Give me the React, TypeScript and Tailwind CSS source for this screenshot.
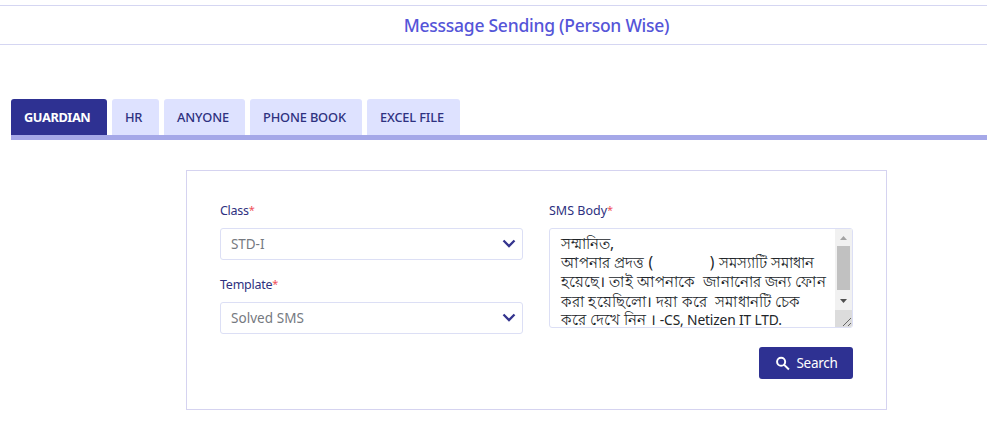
const tabs = [
  { label: "GUARDIAN", box: "w-24 bg-[#2e3192] text-white font-bold", text: "tracking-[-0.42px]" },
  { label: "HR", box: "w-[47px] bg-[#dee2ff] text-[#2e3180] font-medium", text: "tracking-[-0.2px]" },
  { label: "ANYONE", box: "w-[81px] bg-[#dee2ff] text-[#2e3180] font-medium", text: "tracking-[-0.1px]" },
  { label: "PHONE BOOK", box: "w-28 bg-[#dee2ff] text-[#2e3180] font-medium", text: "tracking-[-0.15px]" },
  { label: "EXCEL FILE", box: "w-[93px] bg-[#dee2ff] text-[#2e3180] font-medium", text: "tracking-[-0.15px]" },
];

const messageLines = [
  { text: "সম্মানিত,", style: "" },
  { text: "আপনার প্রদত্ত (              ) সমস্যাটি সমাধান", style: "tracking-[0.06px]" },
  { text: "হয়েছে। তাই আপনাকে  জানানোর জন্য ফোন", style: "tracking-[0.12px]" },
  { text: "করা হয়েছিলো। দয়া করে  সমাধানটি চেক", style: "tracking-[0.16px]" },
];

function Label({ children, text }: { children: string; text: string }) {
  return (
    <div className="h-[18px] whitespace-nowrap text-[12.5px] leading-[18px] text-[#2e3180]">
      <span className={text}>{children}</span>
      <span className="align-[1px] text-[11px] leading-none text-[#f0505a]">*</span>
    </div>
  );
}

function Select({ value, text }: { value: string; text: string }) {
  return (
    <div className="flex h-8 w-[303px] items-center justify-between rounded-[3px] border border-[#dcdff5] pr-[6px] pb-[1px] pl-[10px]">
      <span className={`text-[13.5px] leading-5 text-[#757980] ${text}`}>{value}</span>
      <svg className="h-[9px] w-[14px]" viewBox="0 0 14 9" fill="none" stroke="#34348e" strokeWidth="2.3">
        <path d="M1.5 1.5 7 7l5.5-5.5" />
      </svg>
    </div>
  );
}

function Scrollbar() {
  return (
    <div className="flex h-full w-[17px] flex-col items-center bg-[#f1f1f1]">
      <div className="flex h-[17px] items-center">
        <svg className="h-1 w-[7px]" viewBox="0 0 7 4" fill="#a3a3a3"><path d="M0 4 3.5 0 7 4z" /></svg>
      </div>
      <div className="h-11 w-[13px] bg-[#c1c1c1]" />
      <div className="flex h-5 items-center pt-[2px]">
        <svg className="h-1 w-[7px]" viewBox="0 0 7 4" fill="#505050"><path d="M0 0 3.5 4 7 0z" /></svg>
      </div>
      <div className="flex w-full flex-1 items-end justify-end rounded-br-[2px] bg-[#dcdcdc]">
        <svg className="h-[10px] w-[10px]" viewBox="0 0 10 10" stroke="#666" strokeWidth="1"><path d="M1 9 9 1M6 9l3-3" /></svg>
      </div>
    </div>
  );
}

export default function App() {
  return (
    <div className="h-[434px] w-full overflow-hidden bg-white pt-[5px] font-['Noto_Sans','Open_Sans',sans-serif]">
      <header className="flex h-10 items-center justify-center border-y border-[#d5d6f2] pl-[86px]">
        <h1 className="text-[17.5px] leading-6 font-medium tracking-[-0.25px] whitespace-nowrap text-[#5555d8]">Messsage Sending (Person Wise)</h1>
      </header>
      <nav className="mt-[54px] ml-[11px] flex h-[41px] gap-[5px] border-b-[5px] border-[#a5a8e8]">
        {tabs.map((t) => (
          <div key={t.label} className={`flex h-9 items-center rounded-t-[3px] pt-[1px] pl-[13px] text-[12.8px] whitespace-nowrap ${t.box}`}>
            <span className={t.text}>{t.label}</span>
          </div>
        ))}
      </nav>
      <main className="mt-[30px] ml-[186px] flex h-60 w-[701px] gap-[26px] border border-[#d5d3f0] pt-[31px] pl-[33px]">
        <section className="flex w-[303px] flex-col">
          <Label text="tracking-[-0.3px]">Class</Label>
          <div className="mt-2"><Select value="STD-I" text="tracking-[-0.05px]" /></div>
          <div className="mt-4"><Label text="tracking-[-0.25px]">Template</Label></div>
          <div className="mt-2"><Select value="Solved SMS" text="tracking-[0.05px]" /></div>
        </section>
        <section className="flex w-[304px] flex-col">
          <Label text="tracking-[0px]">SMS Body</Label>
          <div className="mt-2 flex h-[100px] justify-between rounded-[3px] border border-[#dcdff5]">
            <div className="w-[280px] pt-[5px] pl-[11px] text-[15.35px] leading-[19.2px] text-[#212529]">
              {messageLines.map((line) => (
                <div key={line.text} className={`h-[19.2px] whitespace-pre ${line.style}`}>{line.text}</div>
              ))}
              <div className="h-[17px] leading-[17px] whitespace-pre">
                করে দেখে নিন । <span className="text-[13.8px] tracking-[-0.15px]">-CS, Netizen IT LTD.</span>
              </div>
            </div>
            <Scrollbar />
          </div>
          <button className="mt-[19px] flex h-8 w-[94px] items-center justify-center gap-1 self-end rounded-[3px] bg-[#2e3192] pt-[1px] text-[13.5px] text-white">
            <svg className="h-[18px] w-[18px]" viewBox="0 0 24 24" fill="none" stroke="currentColor" strokeWidth="2.6">
              <circle cx="9.5" cy="9" r="5.4" />
              <path d="m13.3 12.8 6.6 6.6" />
            </svg>
            <span className="tracking-[-0.28px]">Search</span>
          </button>
        </section>
      </main>
    </div>
  );
}
